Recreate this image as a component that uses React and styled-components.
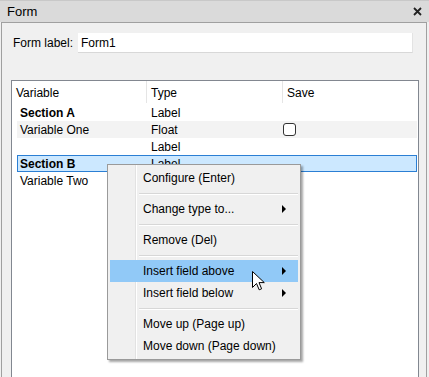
import React from 'react'
import styled, { createGlobalStyle } from 'styled-components'

const Colors = {
  panel: '#f0f0f0',
  title: '#dadada',
  frame: '#a0a0a0',
  listBorder: '#828790',
  text: '#000',
  alt: '#f3f3f3',
  selBg: '#cce8ff',
  selBorder: '#2b7fd4',
  hover: '#91c9f7',
  sep: '#d7d7d7',
}

const GlobalStyle = createGlobalStyle`
  html, body {
    margin: 0;
    padding: 0;
    background: ${Colors.panel};
  }
  body {
    font-family: "Liberation Sans", Arial, sans-serif;
    font-size: 12px;
    color: ${Colors.text};
    overflow: hidden;
  }
`

const Window = styled.div`
  position: relative;
  width: 429px;
  height: 377px;
  display: flex;
  flex-direction: column;
  overflow: hidden;
`

const TitleBar = styled.div`
  height: 22px;
  flex: none;
  display: flex;
  align-items: center;
  justify-content: space-between;
  padding: 0 4px 0 7px;
  background: ${Colors.title};
  border-top: 1px solid #c8c8c8;
  box-sizing: border-box;
  font-size: 13px;
`

const Close = styled.span`
  display: grid;
  place-items: center;
  width: 16px;
  height: 16px;
`

const Panel = styled.div`
  flex: 1;
  margin: 0 2px 0 1px;
  border: 1px solid ${Colors.frame};
  border-bottom: none;
  background: ${Colors.panel};
  padding: 10px 7px 0 9px;
  display: flex;
  flex-direction: column;
  min-height: 0;
`

const LabelRow = styled.div`
  display: flex;
  align-items: center;
  gap: 5px;
  height: 20px;
  padding-right: 6px;
  & label {
    padding-left: 2px;
  }
`

const TextInput = styled.div`
  flex: 1;
  height: 20px;
  box-sizing: border-box;
  background: #fff;
  border-right: 1px solid #e3e3e3;
  border-bottom: 1px solid #d8d8d8;
  padding: 2px 3px;
  line-height: 16px;
`

const List = styled.div`
  margin-top: 27px;
  flex: 1;
  background: #fff;
  border: 1px solid ${Colors.listBorder};
  border-bottom: none;
  display: flex;
  flex-direction: column;
`

const Header = styled.div`
  display: grid;
  grid-template-columns: 135px 136px 1fr;
  height: 23px;
  & > span {
    padding: 5px 4px 0 4px;
    border-right: 1px solid #e5e5e5;
    margin-bottom: 1px;
  }
  & > span:last-child {
    border-right: none;
  }
`

const Rows = styled.div`
  padding: 0 1px 0 5px;
`

const Row = styled.div`
  display: grid;
  grid-template-columns: 130px 136px 1fr;
  height: 17px;
  box-sizing: border-box;
  align-items: center;
  background: ${p => (p.$selected ? Colors.selBg : p.$alt ? Colors.alt : 'transparent')};
  border: 1px solid ${p => (p.$selected ? Colors.selBorder : 'transparent')};
  font-weight: ${p => (p.$bold ? 700 : 400)};
  & > span:first-child {
    padding-left: 2px;
  }
  & > span:nth-child(2) {
    padding-left: 3px;
    font-weight: 400;
  }
`

const Check = styled.span`
  width: 13px;
  height: 13px;
  box-sizing: border-box;
  border: 1px solid #333;
  border-radius: 3px;
  background: #fff;
  margin-left: -1px;
`

const Menu = styled.div`
  position: absolute;
  left: 107px;
  top: 164px;
  width: 194px;
  box-sizing: border-box;
  background: ${Colors.panel};
  border: 1px solid #9a9a9a;
  box-shadow: 2px 2px 2px rgba(0, 0, 0, 0.35);
  padding: 2px;
  background-image: linear-gradient(
    to right,
    transparent 27px,
    #e2e2e2 27px,
    #e2e2e2 28px,
    #fff 28px,
    #fff 29px,
    transparent 29px
  );
`

const Item = styled.div`
  height: 22px;
  display: flex;
  align-items: center;
  justify-content: space-between;
  padding: 0 12px 0 33px;
  background: ${p => (p.$hover ? Colors.hover : 'transparent')};
  position: relative;
`

const Arrow = styled.span`
  width: 0;
  height: 0;
  border-top: 4px solid transparent;
  border-bottom: 4px solid transparent;
  border-left: 4px solid #000;
`

const Sep = styled.div`
  height: 9px;
  display: flex;
  align-items: center;
  padding-left: 29px;
  &::after {
    content: '';
    flex: 1;
    height: 1px;
    background: ${Colors.sep};
    box-shadow: 0 1px 0 #fff;
  }
`

const Pointer = styled.svg`
  position: absolute;
  left: 252px;
  top: 271px;
`

const rows = [
  { name: 'Section A', type: 'Label', bold: true },
  { name: 'Variable One', type: 'Float', alt: true, check: true },
  { name: '', type: 'Label' },
  { name: 'Section B', type: 'Label', bold: true, selected: true },
  { name: 'Variable Two', type: '' },
]

const menu = [
  { label: 'Configure (Enter)' },
  'sep',
  { label: 'Change type to...', sub: true },
  'sep',
  { label: 'Remove (Del)' },
  'sep',
  { label: 'Insert field above', sub: true, hover: true },
  { label: 'Insert field below', sub: true },
  'sep',
  { label: 'Move up (Page up)' },
  { label: 'Move down (Page down)' },
]

export default function App() {
  return (
    <Window>
      <GlobalStyle />
      <TitleBar>
        <span>Form</span>
        <Close>
          <svg width="9" height="9" viewBox="0 0 9 9">
            <path d="M1 1L8 8M8 1L1 8" stroke="#222" strokeWidth="1.8" />
          </svg>
        </Close>
      </TitleBar>
      <Panel>
        <LabelRow>
          <label>Form label:</label>
          <TextInput>Form1</TextInput>
        </LabelRow>
        <List>
          <Header>
            <span>Variable</span>
            <span>Type</span>
            <span>Save</span>
          </Header>
          <Rows>
            {rows.map((r, i) => (
              <Row key={i} $bold={r.bold} $alt={r.alt} $selected={r.selected}>
                <span>{r.name}</span>
                <span>{r.type}</span>
                {r.check ? <Check /> : <span />}
              </Row>
            ))}
          </Rows>
        </List>
      </Panel>
      <Menu>
        {menu.map((m, i) =>
          m === 'sep' ? (
            <Sep key={i} />
          ) : (
            <Item key={i} $hover={m.hover}>
              <span>{m.label}</span>
              {m.sub && <Arrow />}
            </Item>
          )
        )}
      </Menu>
      <Pointer width="13" height="20" viewBox="0 0 13 20">
        <path
          d="M0.5 0.5V16.5L4.5 12.5L7.2 18.8L9.6 17.8L7 11.6H12.3Z"
          fill="#fff"
          stroke="#000"
          strokeWidth="1"
          strokeLinejoin="miter"
        />
      </Pointer>
    </Window>
  )
}
